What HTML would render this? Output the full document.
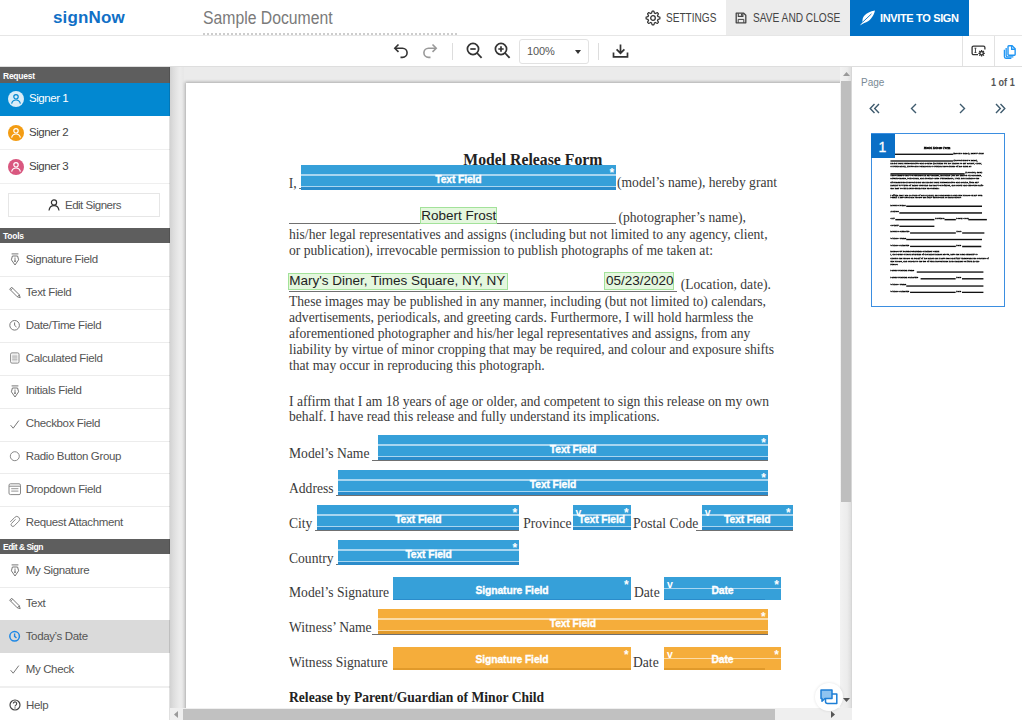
<!DOCTYPE html>
<html><head><meta charset="utf-8"><title>signNow</title>
<style>
html,body{margin:0;padding:0;}
body{width:1022px;height:720px;overflow:hidden;position:relative;background:#fff;font-family:'Liberation Sans', sans-serif;}
.t{position:absolute;white-space:pre;line-height:1;}
.r{position:absolute;}
svg.r{overflow:visible;}
</style></head><body>
<div class="r" style="left:0px;top:35px;width:1022px;height:1px;background:#e6e6e6;"></div>
<div class="t" style="left:53px;top:8.91px;font-size:17px;color:#1070c6;font-weight:bold;font-family:'Liberation Sans', sans-serif;letter-spacing:0.15px;">signNow</div>
<div class="t" style="left:203px;top:9.69px;font-size:17.5px;color:#7a7a7a;font-weight:normal;font-family:'Liberation Sans', sans-serif;letter-spacing:0px;transform:scaleX(0.9);transform-origin:0 0;">Sample Document</div>
<div class="r" style="left:203px;top:33px;width:255px;height:1.5px;background:repeating-linear-gradient(90deg,#cdcdcd 0 2px,transparent 2px 4px);"></div>
<svg class="r" style="left:645px;top:10px" width="16" height="16" viewBox="0 0 16 16"><path d="M14.90 8.00 L14.89 8.27 L14.88 8.54 L14.83 8.81 L14.38 9.01 L13.88 9.17 L13.38 9.29 L12.93 9.39 L12.85 9.58 L12.78 9.77 L12.71 9.95 L12.63 10.14 L12.54 10.32 L12.47 10.50 L12.72 10.89 L12.99 11.33 L13.23 11.80 L13.40 12.26 L13.25 12.48 L13.07 12.68 L12.88 12.88 L12.68 13.07 L12.48 13.25 L12.26 13.40 L11.80 13.23 L11.33 12.99 L10.89 12.72 L10.50 12.47 L10.32 12.54 L10.14 12.63 L9.95 12.71 L9.77 12.78 L9.58 12.85 L9.39 12.93 L9.29 13.38 L9.17 13.88 L9.01 14.38 L8.81 14.83 L8.54 14.88 L8.27 14.89 L8.00 14.90 L7.73 14.89 L7.46 14.88 L7.19 14.83 L6.99 14.38 L6.83 13.88 L6.71 13.38 L6.61 12.93 L6.42 12.85 L6.23 12.78 L6.05 12.71 L5.86 12.63 L5.68 12.54 L5.50 12.47 L5.11 12.72 L4.67 12.99 L4.20 13.23 L3.74 13.40 L3.52 13.25 L3.32 13.07 L3.12 12.88 L2.93 12.68 L2.75 12.48 L2.60 12.26 L2.77 11.80 L3.01 11.33 L3.28 10.89 L3.53 10.50 L3.46 10.32 L3.37 10.14 L3.29 9.95 L3.22 9.77 L3.15 9.58 L3.07 9.39 L2.62 9.29 L2.12 9.17 L1.62 9.01 L1.17 8.81 L1.12 8.54 L1.11 8.27 L1.10 8.00 L1.11 7.73 L1.12 7.46 L1.17 7.19 L1.62 6.99 L2.12 6.83 L2.62 6.71 L3.07 6.61 L3.15 6.42 L3.22 6.23 L3.29 6.05 L3.37 5.86 L3.46 5.68 L3.53 5.50 L3.28 5.11 L3.01 4.67 L2.77 4.20 L2.60 3.74 L2.75 3.52 L2.93 3.32 L3.12 3.12 L3.32 2.93 L3.52 2.75 L3.74 2.60 L4.20 2.77 L4.67 3.01 L5.11 3.28 L5.50 3.53 L5.68 3.46 L5.86 3.37 L6.05 3.29 L6.23 3.22 L6.42 3.15 L6.61 3.07 L6.71 2.62 L6.83 2.12 L6.99 1.62 L7.19 1.17 L7.46 1.12 L7.73 1.11 L8.00 1.10 L8.27 1.11 L8.54 1.12 L8.81 1.17 L9.01 1.62 L9.17 2.12 L9.29 2.62 L9.39 3.07 L9.58 3.15 L9.77 3.22 L9.95 3.29 L10.14 3.37 L10.32 3.46 L10.50 3.53 L10.89 3.28 L11.33 3.01 L11.80 2.77 L12.26 2.60 L12.48 2.75 L12.68 2.93 L12.88 3.12 L13.07 3.32 L13.25 3.52 L13.40 3.74 L13.23 4.20 L12.99 4.67 L12.72 5.11 L12.47 5.50 L12.54 5.68 L12.63 5.86 L12.71 6.05 L12.78 6.23 L12.85 6.42 L12.93 6.61 L13.38 6.71 L13.88 6.83 L14.38 6.99 L14.83 7.19 L14.88 7.46 L14.89 7.73Z" fill="none" stroke="#333" stroke-width="1.25" stroke-linejoin="round"/><circle cx="8" cy="8" r="2.3" fill="none" stroke="#333" stroke-width="1.3"/></svg><div class="t" style="left:665.5px;top:12.09px;font-size:12.3px;color:#444;font-weight:normal;font-family:'Liberation Sans', sans-serif;letter-spacing:0px;transform:scaleX(0.82);transform-origin:0 0;">SETTINGS</div>
<div class="r" style="left:726px;top:0px;width:124px;height:35px;background:#ececec;"></div>
<svg class="r" style="left:735px;top:12px" width="12" height="12" viewBox="0 0 12 12"><path d="M1.2 1.2h7.5l2.1 2.1v7.5H1.2z" fill="none" stroke="#444" stroke-width="1.3" stroke-linejoin="round"/><path d="M3.3 1.2v3.2h4.6V1.2" fill="none" stroke="#444" stroke-width="1.1"/><rect x="6" y="1.6" width="1.4" height="2.2" fill="#444"/><path d="M3.2 10.8V7.4h5.6v3.4" fill="none" stroke="#444" stroke-width="1"/></svg><div class="t" style="left:752.5px;top:12.09px;font-size:12.3px;color:#444;font-weight:normal;font-family:'Liberation Sans', sans-serif;letter-spacing:0px;transform:scaleX(0.826);transform-origin:0 0;">SAVE AND CLOSE</div>
<div class="r" style="left:850px;top:0px;width:119px;height:35.5px;background:#0071c6;"></div>
<svg class="r" style="left:859px;top:10px" width="17" height="16" viewBox="0 0 17 16"><path d="M0.8 15.6L3.6 12.2C2.8 7.5 6 2.5 16 0.6 14.6 6.5 11 11.5 5.2 13z" fill="#fff"/><path d="M3.6 12.2L12.5 3.8" stroke="#0071c6" stroke-width="0.9"/></svg><div class="t" style="left:880px;top:12.69px;font-size:11px;color:#fff;font-weight:bold;font-family:'Liberation Sans', sans-serif;letter-spacing:-0.35px;">INVITE TO SIGN</div>
<div class="r" style="left:0px;top:66px;width:1022px;height:1px;background:#dedede;"></div>
<svg class="r" style="left:393px;top:43px" width="17" height="16" viewBox="0 0 17 16"><path d="M5.5 1.5L1.8 5.2 5.5 8.9" fill="none" stroke="#333" stroke-width="1.6"/><path d="M2 5.2h7.5a4.6 4.6 0 010 9.2H7.5" fill="none" stroke="#333" stroke-width="1.6"/></svg><svg class="r" style="left:421px;top:43px" width="17" height="16" viewBox="0 0 17 16"><path d="M11.5 1.5l3.7 3.7-3.7 3.7" fill="none" stroke="#999" stroke-width="1.6"/><path d="M15 5.2H7.5a4.6 4.6 0 000 9.2h2" fill="none" stroke="#999" stroke-width="1.6"/></svg><div class="r" style="left:452px;top:43px;width:1px;height:17px;background:#dddddd;"></div>
<svg class="r" style="left:466px;top:42px" width="17" height="18" viewBox="0 0 17 18"><circle cx="7" cy="7" r="5.6" fill="none" stroke="#333" stroke-width="1.7"/><path d="M4.3 7h5.4" stroke="#333" stroke-width="1.7"/><path d="M11 11l4.6 4.8" stroke="#333" stroke-width="1.8"/></svg><svg class="r" style="left:494px;top:42px" width="17" height="18" viewBox="0 0 17 18"><circle cx="7" cy="7" r="5.6" fill="none" stroke="#333" stroke-width="1.7"/><path d="M4.3 7h5.4M7 4.3v5.4" stroke="#333" stroke-width="1.7"/><path d="M11 11l4.6 4.8" stroke="#333" stroke-width="1.8"/></svg><div class="r" style="left:518.5px;top:39px;width:68px;height:23px;border:1px solid #e2e2e2;border-radius:3px;background:#fff"></div>
<div class="t" style="left:527px;top:46.49px;font-size:11px;color:#555;font-weight:normal;font-family:'Liberation Sans', sans-serif;letter-spacing:-0.1px;">100%</div>
<svg class="r" style="left:575px;top:50px" width="6" height="4" viewBox="0 0 6 4"><path d="M0 0h6L3 4z" fill="#333"/></svg><div class="r" style="left:598px;top:43px;width:1px;height:17px;background:#dddddd;"></div>
<svg class="r" style="left:612px;top:44px" width="17" height="14" viewBox="0 0 17 14"><path d="M8.5 0.5v8.5M4.6 5.3l3.9 3.9 3.9-3.9" fill="none" stroke="#333" stroke-width="1.7"/><path d="M1.5 8.5v4.3h14V8.5" fill="none" stroke="#333" stroke-width="1.7"/></svg><div class="r" style="left:962px;top:36px;width:1px;height:30px;background:#e2e2e2;"></div>
<div class="r" style="left:994px;top:36px;width:1px;height:30px;background:#e2e2e2;"></div>
<svg class="r" style="left:971px;top:45px" width="16" height="13" viewBox="0 0 16 13"><path d="M7 9.7H2.6A1.5 1.5 0 011.1 8.2V2.6A1.5 1.5 0 012.6 1.1h9.8a1.5 1.5 0 011.5 1.5v1.8" fill="none" stroke="#333" stroke-width="1.3"/><path d="M3.5 3.2h1.9M4.45 3.2v4.3M3.5 7.5h1.9" stroke="#333" stroke-width="0.9"/><g transform="translate(10.6 8.3)"><path d="M0-3.2V3.2M-3.2 0H3.2M-2.3-2.3L2.3 2.3M-2.3 2.3L2.3-2.3" stroke="#333" stroke-width="1.3"/><circle r="2.3" fill="#333"/><circle r="1.05" fill="#fff"/></g></svg><svg class="r" style="left:1002.5px;top:44.5px" width="13" height="13.9" viewBox="0 0 14 15"><path d="M1.5 5.2v7.6A1.5 1.5 0 003 14.3h6" fill="none" stroke="#2196f3" stroke-width="1.4"/><path d="M3.4 3.3v8A1.5 1.5 0 004.9 12.8h6.3" fill="none" stroke="#2196f3" stroke-width="1.4"/><path d="M5.4 1.6a.8.8 0 01.8-.8h3.6l3.3 3.3v6.2a.8.8 0 01-.8.8H6.2a.8.8 0 01-.8-.8z" fill="#fff" stroke="#2196f3" stroke-width="1.5"/><path d="M9.3 0.8v3.8h3.8" fill="none" stroke="#2196f3" stroke-width="1.4"/></svg><div class="r" style="left:0px;top:67px;width:170px;height:653px;background:#fff;"></div>
<div class="r" style="left:0px;top:67px;width:170px;height:15.5px;background:#5e5e5e;"></div>
<div class="t" style="left:3px;top:71.60px;font-size:8.5px;color:#fff;font-weight:bold;font-family:'Liberation Sans', sans-serif;letter-spacing:-0.25px;">Request</div>
<div class="r" style="left:0px;top:82.5px;width:170px;height:33px;background:#0288d1;"></div>
<svg class="r" style="left:8px;top:91px" width="16" height="16" viewBox="0 0 16 16"><circle cx="8" cy="8" r="8" fill="#d9ecf8"/><circle cx="8" cy="5.8" r="2.2" fill="none" stroke="#0288d1" stroke-width="1.2"/><path d="M3.6 12.6c.6-2.2 2.3-3.6 4.4-3.6s3.8 1.4 4.4 3.6" fill="none" stroke="#0288d1" stroke-width="1.2"/></svg>
<div class="t" style="left:29px;top:93.27px;font-size:11.5px;color:#fff;font-weight:normal;font-family:'Liberation Sans', sans-serif;letter-spacing:-0.45px;">Signer 1</div>
<svg class="r" style="left:8px;top:125px" width="16" height="16" viewBox="0 0 16 16"><circle cx="8" cy="8" r="8" fill="#f39c12"/><circle cx="8" cy="5.8" r="2.2" fill="none" stroke="#fff" stroke-width="1.2"/><path d="M3.6 12.6c.6-2.2 2.3-3.6 4.4-3.6s3.8 1.4 4.4 3.6" fill="none" stroke="#fff" stroke-width="1.2"/></svg>
<div class="t" style="left:29px;top:127.27px;font-size:11.5px;color:#444;font-weight:normal;font-family:'Liberation Sans', sans-serif;letter-spacing:-0.45px;">Signer 2</div>
<div class="r" style="left:0px;top:149px;width:170px;height:1px;background:#efefef;"></div>
<svg class="r" style="left:8px;top:159px" width="16" height="16" viewBox="0 0 16 16"><circle cx="8" cy="8" r="8" fill="#d9577f"/><circle cx="8" cy="5.8" r="2.2" fill="none" stroke="#fff" stroke-width="1.2"/><path d="M3.6 12.6c.6-2.2 2.3-3.6 4.4-3.6s3.8 1.4 4.4 3.6" fill="none" stroke="#fff" stroke-width="1.2"/></svg>
<div class="t" style="left:29px;top:161.27px;font-size:11.5px;color:#444;font-weight:normal;font-family:'Liberation Sans', sans-serif;letter-spacing:-0.45px;">Signer 3</div>
<div class="r" style="left:0px;top:183px;width:170px;height:1px;background:#efefef;"></div>
<div class="r" style="left:8px;top:193px;width:150px;height:22px;border:1px solid #e6e6e6;background:#fff"></div>
<svg class="r" style="left:48px;top:199px" width="12" height="12" viewBox="0 0 12 12"><circle cx="6" cy="3.5" r="2.6" fill="none" stroke="#333" stroke-width="1.2"/><path d="M1 11.5c.4-3 2.4-4.8 5-4.8s4.6 1.8 5 4.8" fill="none" stroke="#333" stroke-width="1.2"/></svg><div class="t" style="left:65px;top:199.77px;font-size:11.5px;color:#555;font-weight:normal;font-family:'Liberation Sans', sans-serif;letter-spacing:-0.5px;">Edit Signers</div>
<div class="r" style="left:0px;top:228px;width:170px;height:15px;background:#5e5e5e;"></div>
<div class="t" style="left:3px;top:231.80px;font-size:8.5px;color:#fff;font-weight:bold;font-family:'Liberation Sans', sans-serif;letter-spacing:-0.25px;">Tools</div>
<svg class="r" style="left:9px;top:253.0px" width="12" height="13" viewBox="0 0 12 13"><path d="M2.6 0.9h6.8" stroke="#777" stroke-width="1"/><path d="M3.4 3h5.2l1 3.8L6 12 2.4 6.8z" fill="none" stroke="#777" stroke-width="1" stroke-linejoin="round"/><path d="M6 4.5v3.3" stroke="#777" stroke-width="0.9"/><circle cx="6" cy="8.2" r=".9" fill="#777"/></svg>
<div class="t" style="left:25.7px;top:253.87px;font-size:11.5px;color:#555;font-weight:normal;font-family:'Liberation Sans', sans-serif;letter-spacing:-0.35px;">Signature Field</div>
<div class="r" style="left:0px;top:276.0px;width:170px;height:1px;background:#ececec;"></div>
<svg class="r" style="left:9px;top:285.9px" width="12" height="13" viewBox="0 0 12 13"><path d="M0.7 3.2L2.7 1.2 10.3 8.8 11.2 11.6 8.3 10.8z" fill="none" stroke="#777" stroke-width="1" stroke-linejoin="round"/><path d="M1.7 4.2L3.7 2.2M8.3 10.8L10.3 8.8" stroke="#777" stroke-width="0.9"/></svg>
<div class="t" style="left:25.7px;top:286.77px;font-size:11.5px;color:#555;font-weight:normal;font-family:'Liberation Sans', sans-serif;letter-spacing:-0.35px;">Text Field</div>
<div class="r" style="left:0px;top:308.9px;width:170px;height:1px;background:#ececec;"></div>
<svg class="r" style="left:9px;top:318.8px" width="12" height="13" viewBox="0 0 12 13"><circle cx="5.6" cy="6.3" r="4.8" fill="none" stroke="#777" stroke-width="1"/><path d="M5.6 3.4v3l1.9 1.6" fill="none" stroke="#777" stroke-width="1"/></svg>
<div class="t" style="left:25.7px;top:319.67px;font-size:11.5px;color:#555;font-weight:normal;font-family:'Liberation Sans', sans-serif;letter-spacing:-0.35px;">Date/Time Field</div>
<div class="r" style="left:0px;top:341.8px;width:170px;height:1px;background:#ececec;"></div>
<svg class="r" style="left:9px;top:351.7px" width="12" height="13" viewBox="0 0 12 13"><rect x="1.6" y="0.9" width="8.4" height="10.2" rx="1.3" fill="none" stroke="#888" stroke-width="1"/><rect x="3.2" y="2.5" width="5.2" height="7" fill="#ddd"/><path d="M3.2 4.2h5.2M3.2 5.9h5.2M3.2 7.6h5.2" stroke="#aaa" stroke-width=".6"/></svg>
<div class="t" style="left:25.7px;top:352.57px;font-size:11.5px;color:#555;font-weight:normal;font-family:'Liberation Sans', sans-serif;letter-spacing:-0.35px;">Calculated Field</div>
<div class="r" style="left:0px;top:374.7px;width:170px;height:1px;background:#ececec;"></div>
<svg class="r" style="left:9px;top:384.6px" width="12" height="13" viewBox="0 0 12 13"><path d="M2.6 0.9h6.8" stroke="#777" stroke-width="1"/><path d="M3.4 3h5.2l1 3.8L6 12 2.4 6.8z" fill="none" stroke="#777" stroke-width="1" stroke-linejoin="round"/><path d="M6 4.5v3.3" stroke="#777" stroke-width="0.9"/><circle cx="6" cy="8.2" r=".9" fill="#777"/></svg>
<div class="t" style="left:25.7px;top:385.47px;font-size:11.5px;color:#555;font-weight:normal;font-family:'Liberation Sans', sans-serif;letter-spacing:-0.35px;">Initials Field</div>
<div class="r" style="left:0px;top:407.6px;width:170px;height:1px;background:#ececec;"></div>
<svg class="r" style="left:9px;top:417.5px" width="12" height="13" viewBox="0 0 12 13"><path d="M1.6 7.2l2.6 3L9.8 2.6" fill="none" stroke="#777" stroke-width="1"/></svg>
<div class="t" style="left:25.7px;top:418.37px;font-size:11.5px;color:#555;font-weight:normal;font-family:'Liberation Sans', sans-serif;letter-spacing:-0.35px;">Checkbox Field</div>
<div class="r" style="left:0px;top:440.5px;width:170px;height:1px;background:#ececec;"></div>
<svg class="r" style="left:9px;top:450.4px" width="12" height="13" viewBox="0 0 12 13"><circle cx="5.8" cy="6.2" r="4.5" fill="none" stroke="#888" stroke-width="1"/></svg>
<div class="t" style="left:25.7px;top:451.27px;font-size:11.5px;color:#555;font-weight:normal;font-family:'Liberation Sans', sans-serif;letter-spacing:-0.35px;">Radio Button Group</div>
<div class="r" style="left:0px;top:473.4px;width:170px;height:1px;background:#ececec;"></div>
<svg class="r" style="left:9px;top:483.29999999999995px" width="12" height="13" viewBox="0 0 12 13"><rect x="0" y="0.8" width="11.5" height="10.8" rx="1.5" fill="none" stroke="#888" stroke-width="1"/><path d="M0 3.2h11.5" stroke="#888" stroke-width="1"/><path d="M2.2 5.6h7.2M2.2 8.2h7.2" stroke="#aaa" stroke-width="1.2"/></svg>
<div class="t" style="left:25.7px;top:484.17px;font-size:11.5px;color:#555;font-weight:normal;font-family:'Liberation Sans', sans-serif;letter-spacing:-0.35px;">Dropdown Field</div>
<div class="r" style="left:0px;top:506.29999999999995px;width:170px;height:1px;background:#ececec;"></div>
<svg class="r" style="left:9px;top:516.2px" width="12" height="13" viewBox="0 0 12 13"><path d="M6.5 3.3L2.6 7.4a1.8 1.8 0 002.6 2.5L9.8 5.3a2.8 2.8 0 00-4-4L1.3 5.9" fill="none" stroke="#888" stroke-width="1"/></svg>
<div class="t" style="left:25.7px;top:517.07px;font-size:11.5px;color:#555;font-weight:normal;font-family:'Liberation Sans', sans-serif;letter-spacing:-0.35px;">Request Attachment</div>
<div class="r" style="left:0px;top:539px;width:170px;height:15px;background:#5e5e5e;"></div>
<div class="t" style="left:3px;top:543.10px;font-size:8.5px;color:#fff;font-weight:bold;font-family:'Liberation Sans', sans-serif;letter-spacing:-0.5px;">Edit &amp; Sign</div>
<svg class="r" style="left:9px;top:564px" width="12" height="13" viewBox="0 0 12 13"><path d="M2.6 0.9h6.8" stroke="#777" stroke-width="1"/><path d="M3.4 3h5.2l1 3.8L6 12 2.4 6.8z" fill="none" stroke="#777" stroke-width="1" stroke-linejoin="round"/><path d="M6 4.5v3.3" stroke="#777" stroke-width="0.9"/><circle cx="6" cy="8.2" r=".9" fill="#777"/></svg>
<div class="t" style="left:25.7px;top:564.87px;font-size:11.5px;color:#555;font-weight:normal;font-family:'Liberation Sans', sans-serif;letter-spacing:-0.35px;">My Signature</div>
<div class="r" style="left:0px;top:587px;width:170px;height:1px;background:#ececec;"></div>
<svg class="r" style="left:9px;top:597px" width="12" height="13" viewBox="0 0 12 13"><path d="M0.7 3.2L2.7 1.2 10.3 8.8 11.2 11.6 8.3 10.8z" fill="none" stroke="#777" stroke-width="1" stroke-linejoin="round"/><path d="M1.7 4.2L3.7 2.2M8.3 10.8L10.3 8.8" stroke="#777" stroke-width="0.9"/></svg>
<div class="t" style="left:25.7px;top:597.87px;font-size:11.5px;color:#555;font-weight:normal;font-family:'Liberation Sans', sans-serif;letter-spacing:-0.35px;">Text</div>
<div class="r" style="left:0px;top:620px;width:170px;height:1px;background:#ececec;"></div>
<div class="r" style="left:0px;top:620px;width:170px;height:33px;background:#dadada;"></div>
<svg class="r" style="left:9px;top:630px" width="12" height="13" viewBox="0 0 12 13"><circle cx="5.6" cy="6.3" r="4.8" fill="none" stroke="#1e88e5" stroke-width="1.5"/><path d="M5.6 3.4v3l1.9 1.6" fill="none" stroke="#1e88e5" stroke-width="1.4"/></svg>
<div class="t" style="left:25.7px;top:630.87px;font-size:11.5px;color:#555;font-weight:normal;font-family:'Liberation Sans', sans-serif;letter-spacing:-0.35px;">Today’s Date</div>
<svg class="r" style="left:9px;top:663px" width="12" height="13" viewBox="0 0 12 13"><path d="M1.6 7.2l2.6 3L9.8 2.6" fill="none" stroke="#777" stroke-width="1"/></svg>
<div class="t" style="left:25.7px;top:663.87px;font-size:11.5px;color:#555;font-weight:normal;font-family:'Liberation Sans', sans-serif;letter-spacing:-0.35px;">My Check</div>
<div class="r" style="left:0px;top:685.5px;width:170px;height:2.5px;background:#efefef;"></div>
<svg class="r" style="left:9px;top:699px" width="12" height="12" viewBox="0 0 12 12"><circle cx="6" cy="6" r="5" fill="none" stroke="#444" stroke-width="1.2"/><path d="M4.3 4.6a1.7 1.7 0 113 1.1c-.8.6-1.3.9-1.3 1.7" fill="none" stroke="#444" stroke-width="1.1"/><circle cx="6" cy="8.9" r=".7" fill="#444"/></svg>
<div class="t" style="left:26px;top:699.77px;font-size:11.5px;color:#555;font-weight:normal;font-family:'Liberation Sans', sans-serif;letter-spacing:-0.35px;">Help</div>
<div class="r" style="left:169px;top:67px;width:1px;height:653px;background:rgba(0,0,0,0.12);"></div>
<div class="r" style="left:170px;top:67px;width:682px;height:653px;background:#ebebeb;"></div>
<div class="r" style="left:170px;top:67px;width:14px;height:641px;background:linear-gradient(90deg,#d2d2d2 0,#dcdcdc 3px,#e6e6e6 7px,#ececec 10px,#e8e8e8 13px);"></div>
<div class="r" style="left:185.5px;top:82.5px;width:660px;height:640px;background:#fff;box-shadow:0 0 3px 1px rgba(0,0,0,0.28)"></div>
<div class="r" style="left:839.5px;top:67px;width:12.5px;height:641px;background:linear-gradient(90deg,#f2f2f2 0,#ececec 60%,#dedede 92%,#cfcfcf 100%);"></div>
<div class="r" style="left:841px;top:80.5px;width:10px;height:421.5px;background:#bebebe;"></div>
<svg class="r" style="left:843px;top:72px" width="7" height="4" viewBox="0 0 7 4"><path d="M0 4h7L3.5 0z" fill="#9a9a9a"/></svg><svg class="r" style="left:843px;top:698px" width="7" height="4" viewBox="0 0 7 4"><path d="M0 0h7L3.5 4z" fill="#555"/></svg><div class="r" style="left:170px;top:708px;width:682px;height:12px;background:#efefef;"></div>
<div class="r" style="left:183px;top:709px;width:592px;height:11px;background:#c1c1c1;"></div>
<svg class="r" style="left:174px;top:711px" width="4" height="7" viewBox="0 0 4 7"><path d="M4 0v7L0 3.5z" fill="#9a9a9a"/></svg><svg class="r" style="left:831px;top:711px" width="4" height="7" viewBox="0 0 4 7"><path d="M0 0v7l4-3.5z" fill="#555"/></svg><div class="t" style="left:463.3px;top:151.51px;font-size:15.75px;color:#222;font-weight:bold;font-family:'Liberation Serif', serif;letter-spacing:0px;">Model Release Form</div>
<div class="t" style="left:288.8px;top:176.81px;font-size:13.6px;color:#3a3a3a;font-weight:normal;font-family:'Liberation Serif', serif;letter-spacing:0px;">I,</div>
<div class="r" style="left:299px;top:188px;width:317px;height:1px;background:#707070;"></div>
<div class="t" style="left:617px;top:176.31px;font-size:13.6px;color:#3a3a3a;font-weight:normal;font-family:'Liberation Serif', serif;letter-spacing:0px;">(model’s name), hereby grant</div>
<div class="r" style="left:288.8px;top:223px;width:327.2px;height:1px;background:#707070;"></div>
<div class="t" style="left:618.5px;top:211.31px;font-size:13.6px;color:#3a3a3a;font-weight:normal;font-family:'Liberation Serif', serif;letter-spacing:0px;">(photographer’s name),</div>
<div class="t" style="left:289px;top:228.11px;font-size:13.6px;color:#3a3a3a;font-weight:normal;font-family:'Liberation Serif', serif;letter-spacing:0px;">his/her legal representatives and assigns (including but not limited to any agency, client,</div>
<div class="t" style="left:289px;top:244.01px;font-size:13.6px;color:#3a3a3a;font-weight:normal;font-family:'Liberation Serif', serif;letter-spacing:0px;">or publication), irrevocable permission to publish photographs of me taken at:</div>
<div class="r" style="left:288.8px;top:290.5px;width:387.8px;height:1px;background:#707070;"></div>
<div class="t" style="left:680.7px;top:278.31px;font-size:13.6px;color:#3a3a3a;font-weight:normal;font-family:'Liberation Serif', serif;letter-spacing:0px;">(Location, date).</div>
<div class="t" style="left:289px;top:294.81px;font-size:13.6px;color:#3a3a3a;font-weight:normal;font-family:'Liberation Serif', serif;letter-spacing:0px;">These images may be published in any manner, including (but not limited to) calendars,</div>
<div class="t" style="left:289px;top:310.96px;font-size:13.6px;color:#3a3a3a;font-weight:normal;font-family:'Liberation Serif', serif;letter-spacing:0px;">advertisements, periodicals, and greeting cards. Furthermore, I will hold harmless the</div>
<div class="t" style="left:289px;top:327.11px;font-size:13.6px;color:#3a3a3a;font-weight:normal;font-family:'Liberation Serif', serif;letter-spacing:0px;">aforementioned photographer and his/her legal representatives and assigns, from any</div>
<div class="t" style="left:289px;top:343.26px;font-size:13.6px;color:#3a3a3a;font-weight:normal;font-family:'Liberation Serif', serif;letter-spacing:0px;">liability by virtue of minor cropping that may be required, and colour and exposure shifts</div>
<div class="t" style="left:289px;top:359.41px;font-size:13.6px;color:#3a3a3a;font-weight:normal;font-family:'Liberation Serif', serif;letter-spacing:0px;">that may occur in reproducing this photograph.</div>
<div class="t" style="left:289px;top:394.71px;font-size:13.6px;color:#3a3a3a;font-weight:normal;font-family:'Liberation Serif', serif;letter-spacing:0px;">I affirm that I am 18 years of age or older, and competent to sign this release on my own</div>
<div class="t" style="left:289px;top:409.91px;font-size:13.6px;color:#3a3a3a;font-weight:normal;font-family:'Liberation Serif', serif;letter-spacing:0px;">behalf. I have read this release and fully understand its implications.</div>
<div class="t" style="left:289px;top:446.81px;font-size:13.6px;color:#3a3a3a;font-weight:normal;font-family:'Liberation Serif', serif;letter-spacing:0px;">Model’s Name</div>
<div class="r" style="left:372px;top:459.5px;width:396px;height:1px;background:#707070;"></div>
<div class="t" style="left:289px;top:481.81px;font-size:13.6px;color:#3a3a3a;font-weight:normal;font-family:'Liberation Serif', serif;letter-spacing:0px;">Address</div>
<div class="r" style="left:336px;top:494.5px;width:432px;height:1px;background:#707070;"></div>
<div class="t" style="left:289px;top:517.31px;font-size:13.6px;color:#3a3a3a;font-weight:normal;font-family:'Liberation Serif', serif;letter-spacing:0px;">City</div>
<div class="r" style="left:315px;top:529.5px;width:204px;height:1px;background:#707070;"></div>
<div class="t" style="left:523.2px;top:517.31px;font-size:13.6px;color:#3a3a3a;font-weight:normal;font-family:'Liberation Serif', serif;letter-spacing:0px;">Province</div>
<div class="t" style="left:632.9px;top:517.31px;font-size:13.6px;color:#3a3a3a;font-weight:normal;font-family:'Liberation Serif', serif;letter-spacing:0px;">Postal Code</div>
<div class="r" style="left:696px;top:529.5px;width:97px;height:1px;background:#707070;"></div>
<div class="t" style="left:289px;top:551.71px;font-size:13.6px;color:#3a3a3a;font-weight:normal;font-family:'Liberation Serif', serif;letter-spacing:0px;">Country</div>
<div class="r" style="left:336px;top:564px;width:183px;height:1px;background:#707070;"></div>
<div class="t" style="left:289px;top:586.01px;font-size:13.6px;color:#3a3a3a;font-weight:normal;font-family:'Liberation Serif', serif;letter-spacing:0px;">Model’s Signature</div>
<div class="t" style="left:634px;top:586.31px;font-size:13.6px;color:#3a3a3a;font-weight:normal;font-family:'Liberation Serif', serif;letter-spacing:0px;">Date</div>
<div class="t" style="left:289px;top:621.11px;font-size:13.6px;color:#3a3a3a;font-weight:normal;font-family:'Liberation Serif', serif;letter-spacing:0px;">Witness’ Name</div>
<div class="r" style="left:372px;top:633.5px;width:396px;height:1px;background:#707070;"></div>
<div class="t" style="left:289px;top:656.01px;font-size:13.6px;color:#3a3a3a;font-weight:normal;font-family:'Liberation Serif', serif;letter-spacing:0px;">Witness Signature</div>
<div class="t" style="left:633px;top:656.31px;font-size:13.6px;color:#3a3a3a;font-weight:normal;font-family:'Liberation Serif', serif;letter-spacing:0px;">Date</div>
<div class="t" style="left:289px;top:691.11px;font-size:13.6px;color:#222;font-weight:bold;font-family:'Liberation Serif', serif;letter-spacing:0px;">Release by Parent/Guardian of Minor Child</div>
<div class="r" style="left:419.7px;top:207.3px;width:77.6px;height:17px;background:#e4f7de;border:1px solid #a3e29a;box-sizing:border-box"></div>
<div class="t" style="left:421.2px;top:208.77px;font-size:13.5px;color:#222;font-weight:normal;font-family:'Liberation Sans', sans-serif;letter-spacing:0px;">Robert Frost</div>
<div class="r" style="left:287.7px;top:272.7px;width:220.3px;height:17.5px;background:#e4f7de;border:1px solid #a3e29a;box-sizing:border-box"></div>
<div class="t" style="left:289.2px;top:274.07px;font-size:13.5px;color:#222;font-weight:normal;font-family:'Liberation Sans', sans-serif;letter-spacing:0px;">Mary's Diner, Times Square, NY, NY</div>
<div class="r" style="left:604.4px;top:272px;width:69.6px;height:18px;background:#e4f7de;border:1px solid #a3e29a;box-sizing:border-box"></div>
<div class="t" style="left:605.9px;top:274.07px;font-size:13.5px;color:#222;font-weight:normal;font-family:'Liberation Sans', sans-serif;letter-spacing:0px;">05/23/2020</div>
<div class="r" style="left:300.5px;top:165px;width:315.79999999999995px;height:25px;background:#36a0d9"><div class="r" style="left:0;top:9px;width:100%;height:2px;background:#a9d6f0"></div><div class="r" style="left:0;top:20.8px;width:100%;height:1.5px;background:#a9d6f0"></div><div class="r" style="left:0;top:22.3px;width:100%;height:2.7px;background:#2b8ccb"></div></div>
<div class="t" style="left:300.5px;width:315.79999999999995px;text-align:center;top:172.6px;font-size:10.3px;line-height:13px;color:#fff;font-weight:bold;font-family:'Liberation Sans', sans-serif;letter-spacing:-0.1px;-webkit-text-stroke:0.35px #fff">Text Field</div>
<div class="t" style="left:609.5px;top:167px;font-size:12px;line-height:12px;color:#fff;font-family:'Liberation Sans', sans-serif;font-weight:bold">*</div>
<div class="r" style="left:378px;top:435px;width:390px;height:25px;background:#36a0d9"><div class="r" style="left:0;top:9px;width:100%;height:2px;background:#a9d6f0"></div><div class="r" style="left:0;top:20.8px;width:100%;height:1.5px;background:#a9d6f0"></div><div class="r" style="left:0;top:22.3px;width:100%;height:2.7px;background:#2b8ccb"></div></div>
<div class="t" style="left:378px;width:390px;text-align:center;top:442.6px;font-size:10.3px;line-height:13px;color:#fff;font-weight:bold;font-family:'Liberation Sans', sans-serif;letter-spacing:-0.1px;-webkit-text-stroke:0.35px #fff">Text Field</div>
<div class="t" style="left:761.2px;top:437px;font-size:12px;line-height:12px;color:#fff;font-family:'Liberation Sans', sans-serif;font-weight:bold">*</div>
<div class="r" style="left:338px;top:470px;width:430px;height:25px;background:#36a0d9"><div class="r" style="left:0;top:9px;width:100%;height:2px;background:#a9d6f0"></div><div class="r" style="left:0;top:20.8px;width:100%;height:1.5px;background:#a9d6f0"></div><div class="r" style="left:0;top:22.3px;width:100%;height:2.7px;background:#2b8ccb"></div></div>
<div class="t" style="left:338px;width:430px;text-align:center;top:477.6px;font-size:10.3px;line-height:13px;color:#fff;font-weight:bold;font-family:'Liberation Sans', sans-serif;letter-spacing:-0.1px;-webkit-text-stroke:0.35px #fff">Text Field</div>
<div class="t" style="left:761.2px;top:472px;font-size:12px;line-height:12px;color:#fff;font-family:'Liberation Sans', sans-serif;font-weight:bold">*</div>
<div class="r" style="left:317.4px;top:505px;width:201.80000000000007px;height:25px;background:#36a0d9"><div class="r" style="left:0;top:9px;width:100%;height:2px;background:#a9d6f0"></div><div class="r" style="left:0;top:20.8px;width:100%;height:1.5px;background:#a9d6f0"></div><div class="r" style="left:0;top:22.3px;width:100%;height:2.7px;background:#2b8ccb"></div></div>
<div class="t" style="left:317.4px;width:201.80000000000007px;text-align:center;top:512.6px;font-size:10.3px;line-height:13px;color:#fff;font-weight:bold;font-family:'Liberation Sans', sans-serif;letter-spacing:-0.1px;-webkit-text-stroke:0.35px #fff">Text Field</div>
<div class="t" style="left:512.4000000000001px;top:507px;font-size:12px;line-height:12px;color:#fff;font-family:'Liberation Sans', sans-serif;font-weight:bold">*</div>
<div class="r" style="left:572.6px;top:505px;width:58.19999999999993px;height:25px;background:#36a0d9"><div class="r" style="left:0;top:9px;width:100%;height:2px;background:#a9d6f0"></div><div class="r" style="left:0;top:20.8px;width:100%;height:1.5px;background:#a9d6f0"></div><div class="r" style="left:0;top:22.3px;width:100%;height:2.7px;background:#2b8ccb"></div></div>
<div class="t" style="left:572.6px;width:58.19999999999993px;text-align:center;top:512.6px;font-size:10.3px;line-height:13px;color:#fff;font-weight:bold;font-family:'Liberation Sans', sans-serif;letter-spacing:-0.1px;-webkit-text-stroke:0.35px #fff">Text Field</div>
<div class="t" style="left:624.0px;top:507px;font-size:12px;line-height:12px;color:#fff;font-family:'Liberation Sans', sans-serif;font-weight:bold">*</div>
<div class="t" style="left:575.6px;top:506.5px;font-size:10.5px;line-height:10px;color:#fff;font-family:'Liberation Sans', sans-serif;font-weight:bold">v</div>
<div class="r" style="left:701.8px;top:505px;width:90.90000000000009px;height:25px;background:#36a0d9"><div class="r" style="left:0;top:9px;width:100%;height:2px;background:#a9d6f0"></div><div class="r" style="left:0;top:20.8px;width:100%;height:1.5px;background:#a9d6f0"></div><div class="r" style="left:0;top:22.3px;width:100%;height:2.7px;background:#2b8ccb"></div></div>
<div class="t" style="left:701.8px;width:90.90000000000009px;text-align:center;top:512.6px;font-size:10.3px;line-height:13px;color:#fff;font-weight:bold;font-family:'Liberation Sans', sans-serif;letter-spacing:-0.1px;-webkit-text-stroke:0.35px #fff">Text Field</div>
<div class="t" style="left:785.9000000000001px;top:507px;font-size:12px;line-height:12px;color:#fff;font-family:'Liberation Sans', sans-serif;font-weight:bold">*</div>
<div class="t" style="left:704.8px;top:506.5px;font-size:10.5px;line-height:10px;color:#fff;font-family:'Liberation Sans', sans-serif;font-weight:bold">v</div>
<div class="r" style="left:338px;top:540px;width:181.20000000000005px;height:25px;background:#36a0d9"><div class="r" style="left:0;top:9px;width:100%;height:2px;background:#a9d6f0"></div><div class="r" style="left:0;top:20.8px;width:100%;height:1.5px;background:#a9d6f0"></div><div class="r" style="left:0;top:22.3px;width:100%;height:2.7px;background:#2b8ccb"></div></div>
<div class="t" style="left:338px;width:181.20000000000005px;text-align:center;top:547.6px;font-size:10.3px;line-height:13px;color:#fff;font-weight:bold;font-family:'Liberation Sans', sans-serif;letter-spacing:-0.1px;-webkit-text-stroke:0.35px #fff">Text Field</div>
<div class="t" style="left:512.4000000000001px;top:542px;font-size:12px;line-height:12px;color:#fff;font-family:'Liberation Sans', sans-serif;font-weight:bold">*</div>
<div class="r" style="left:393.2px;top:577px;width:237.7px;height:23px;background:#36a0d9"><div class="r" style="left:0;bottom:0;width:100%;height:1.2px;background:#2b8ccb"></div></div>
<div class="t" style="left:393.2px;width:237.7px;text-align:center;top:583.6px;font-size:10.3px;line-height:13px;color:#fff;font-weight:bold;font-family:'Liberation Sans', sans-serif;letter-spacing:-0.1px;-webkit-text-stroke:0.35px #fff">Signature Field</div>
<div class="t" style="left:624.1px;top:579px;font-size:12px;line-height:12px;color:#fff;font-family:'Liberation Sans', sans-serif;font-weight:bold">*</div>
<div class="r" style="left:664px;top:577px;width:117px;height:23px;background:#36a0d9"><div class="r" style="left:0;top:10.5px;width:100%;height:1.5px;background:#a9d6f0"></div><div class="r" style="left:0;bottom:0;width:86%;height:1.2px;background:#2b8ccb"></div></div>
<div class="t" style="left:664px;width:117px;text-align:center;top:583.6px;font-size:10.3px;line-height:13px;color:#fff;font-weight:bold;font-family:'Liberation Sans', sans-serif;letter-spacing:-0.1px;-webkit-text-stroke:0.35px #fff">Date</div>
<div class="t" style="left:774.2px;top:579px;font-size:12px;line-height:12px;color:#fff;font-family:'Liberation Sans', sans-serif;font-weight:bold">*</div>
<div class="t" style="left:667px;top:578.5px;font-size:10.5px;line-height:10px;color:#fff;font-family:'Liberation Sans', sans-serif;font-weight:bold">v</div>
<div class="r" style="left:378px;top:609px;width:389.79999999999995px;height:25px;background:#f5ad3b"><div class="r" style="left:0;top:9px;width:100%;height:2px;background:#fbdca8"></div><div class="r" style="left:0;top:20.8px;width:100%;height:1.5px;background:#fbdca8"></div><div class="r" style="left:0;top:22.3px;width:100%;height:2.7px;background:#e19a2b"></div></div>
<div class="t" style="left:378px;width:389.79999999999995px;text-align:center;top:616.6px;font-size:10.3px;line-height:13px;color:#fff;font-weight:bold;font-family:'Liberation Sans', sans-serif;letter-spacing:-0.1px;-webkit-text-stroke:0.35px #fff">Text Field</div>
<div class="t" style="left:761.0px;top:611px;font-size:12px;line-height:12px;color:#fff;font-family:'Liberation Sans', sans-serif;font-weight:bold">*</div>
<div class="r" style="left:393.2px;top:647px;width:237.7px;height:22.5px;background:#f5ad3b"><div class="r" style="left:0;bottom:0;width:100%;height:1.2px;background:#e19a2b"></div></div>
<div class="t" style="left:393.2px;width:237.7px;text-align:center;top:653.4px;font-size:10.3px;line-height:13px;color:#fff;font-weight:bold;font-family:'Liberation Sans', sans-serif;letter-spacing:-0.1px;-webkit-text-stroke:0.35px #fff">Signature Field</div>
<div class="t" style="left:624.1px;top:649px;font-size:12px;line-height:12px;color:#fff;font-family:'Liberation Sans', sans-serif;font-weight:bold">*</div>
<div class="r" style="left:664px;top:647px;width:117px;height:22.5px;background:#f5ad3b"><div class="r" style="left:0;top:10.5px;width:100%;height:1.5px;background:#fbdca8"></div><div class="r" style="left:0;bottom:0;width:86%;height:1.2px;background:#e19a2b"></div></div>
<div class="t" style="left:664px;width:117px;text-align:center;top:653.4px;font-size:10.3px;line-height:13px;color:#fff;font-weight:bold;font-family:'Liberation Sans', sans-serif;letter-spacing:-0.1px;-webkit-text-stroke:0.35px #fff">Date</div>
<div class="t" style="left:774.2px;top:649px;font-size:12px;line-height:12px;color:#fff;font-family:'Liberation Sans', sans-serif;font-weight:bold">*</div>
<div class="t" style="left:667px;top:648.5px;font-size:10.5px;line-height:10px;color:#fff;font-family:'Liberation Sans', sans-serif;font-weight:bold">v</div>
<div class="r" style="left:815px;top:683px;width:28px;height:28px;border-radius:50%;background:#fff;box-shadow:0 0 3px rgba(0,0,0,0.12)"></div>
<svg class="r" style="left:820px;top:689px" width="18" height="17" viewBox="0 0 18 17"><path d="M1 1h11v8.5H5L2 12.2V9.5H1z" fill="#8ec3f0" stroke="#1e7fd6" stroke-width="1.5" stroke-linejoin="round"/><path d="M12 5h4.8v9.5H7.5A2 2 0 015.5 12.5V9.5" fill="none" stroke="#1e7fd6" stroke-width="1.5" stroke-linejoin="round"/></svg><div class="r" style="left:852px;top:67px;width:170px;height:653px;background:#fff;"></div>
<div class="t" style="left:861px;top:77.94px;font-size:10px;color:#7a8a95;font-weight:normal;font-family:'Liberation Sans', sans-serif;letter-spacing:0px;">Page</div>
<div class="t" style="left:991px;top:77.58px;font-size:10.3px;color:#555;font-weight:bold;font-family:'Liberation Sans', sans-serif;letter-spacing:0px;transform:scaleX(0.88);transform-origin:0 0;">1 of 1</div>
<svg class="r" style="left:869px;top:103px" width="11" height="11" viewBox="0 0 11 11"><path d="M5.5 1L1.2 5.5 5.5 10M10 1L5.7 5.5 10 10" fill="none" stroke="#3f5b6e" stroke-width="1.4"/></svg><svg class="r" style="left:910px;top:103px" width="7" height="11" viewBox="0 0 7 11"><path d="M6 1L1.5 5.5 6 10" fill="none" stroke="#3f5b6e" stroke-width="1.4"/></svg><svg class="r" style="left:959px;top:103px" width="7" height="11" viewBox="0 0 7 11"><path d="M1 1l4.5 4.5L1 10" fill="none" stroke="#3f5b6e" stroke-width="1.4"/></svg><svg class="r" style="left:995px;top:103px" width="11" height="11" viewBox="0 0 11 11"><path d="M1 1l4.3 4.5L1 10M5.5 1l4.3 4.5L5.5 10" fill="none" stroke="#3f5b6e" stroke-width="1.4"/></svg><div class="r" style="left:870.5px;top:133px;width:134px;height:173.5px;border:1.5px solid #3b8ee0;box-sizing:border-box;background:#fff"></div>
<div class="r" style="left:835.26px;top:117.99px;width:1px;height:1px;transform:scale(0.1915);transform-origin:0 0"><div class="t" style="left:463.3px;top:150.81px;font-size:15.75px;color:#000;font-weight:bold;font-family:'Liberation Serif', serif;letter-spacing:0px;-webkit-text-stroke:1.6px #000;">Model Release Form</div>
<div class="t" style="left:288.8px;top:176.11px;font-size:13.6px;color:#000;font-weight:normal;font-family:'Liberation Serif', serif;letter-spacing:0px;-webkit-text-stroke:1.6px #000;">I,</div>
<div class="r" style="left:299px;top:185.5px;width:317px;height:7.5px;background:#111;"></div>
<div class="t" style="left:617px;top:175.61px;font-size:13.6px;color:#000;font-weight:normal;font-family:'Liberation Serif', serif;letter-spacing:0px;-webkit-text-stroke:1.6px #000;">(model’s name), hereby grant</div>
<div class="r" style="left:288.8px;top:220.5px;width:327.2px;height:7.5px;background:#111;"></div>
<div class="t" style="left:618.5px;top:210.61px;font-size:13.6px;color:#000;font-weight:normal;font-family:'Liberation Serif', serif;letter-spacing:0px;-webkit-text-stroke:1.6px #000;">(photographer’s name),</div>
<div class="t" style="left:289px;top:227.41px;font-size:13.6px;color:#000;font-weight:normal;font-family:'Liberation Serif', serif;letter-spacing:0px;-webkit-text-stroke:1.6px #000;">his/her legal representatives and assigns (including but not limited to any agency, client,</div>
<div class="t" style="left:289px;top:243.31px;font-size:13.6px;color:#000;font-weight:normal;font-family:'Liberation Serif', serif;letter-spacing:0px;-webkit-text-stroke:1.6px #000;">or publication), irrevocable permission to publish photographs of me taken at:</div>
<div class="r" style="left:288.8px;top:288.0px;width:387.8px;height:7.5px;background:#111;"></div>
<div class="t" style="left:680.7px;top:277.61px;font-size:13.6px;color:#000;font-weight:normal;font-family:'Liberation Serif', serif;letter-spacing:0px;-webkit-text-stroke:1.6px #000;">(Location, date).</div>
<div class="t" style="left:289px;top:294.11px;font-size:13.6px;color:#000;font-weight:normal;font-family:'Liberation Serif', serif;letter-spacing:0px;-webkit-text-stroke:1.6px #000;">These images may be published in any manner, including (but not limited to) calendars,</div>
<div class="t" style="left:289px;top:310.26px;font-size:13.6px;color:#000;font-weight:normal;font-family:'Liberation Serif', serif;letter-spacing:0px;-webkit-text-stroke:1.6px #000;">advertisements, periodicals, and greeting cards. Furthermore, I will hold harmless the</div>
<div class="t" style="left:289px;top:326.41px;font-size:13.6px;color:#000;font-weight:normal;font-family:'Liberation Serif', serif;letter-spacing:0px;-webkit-text-stroke:1.6px #000;">aforementioned photographer and his/her legal representatives and assigns, from any</div>
<div class="t" style="left:289px;top:342.56px;font-size:13.6px;color:#000;font-weight:normal;font-family:'Liberation Serif', serif;letter-spacing:0px;-webkit-text-stroke:1.6px #000;">liability by virtue of minor cropping that may be required, and colour and exposure shifts</div>
<div class="t" style="left:289px;top:358.71px;font-size:13.6px;color:#000;font-weight:normal;font-family:'Liberation Serif', serif;letter-spacing:0px;-webkit-text-stroke:1.6px #000;">that may occur in reproducing this photograph.</div>
<div class="t" style="left:289px;top:394.01px;font-size:13.6px;color:#000;font-weight:normal;font-family:'Liberation Serif', serif;letter-spacing:0px;-webkit-text-stroke:1.6px #000;">I affirm that I am 18 years of age or older, and competent to sign this release on my own</div>
<div class="t" style="left:289px;top:409.21px;font-size:13.6px;color:#000;font-weight:normal;font-family:'Liberation Serif', serif;letter-spacing:0px;-webkit-text-stroke:1.6px #000;">behalf. I have read this release and fully understand its implications.</div>
<div class="t" style="left:289px;top:446.11px;font-size:13.6px;color:#000;font-weight:normal;font-family:'Liberation Serif', serif;letter-spacing:0px;-webkit-text-stroke:1.6px #000;">Model’s Name</div>
<div class="r" style="left:372px;top:457.0px;width:396px;height:7.5px;background:#111;"></div>
<div class="t" style="left:289px;top:481.11px;font-size:13.6px;color:#000;font-weight:normal;font-family:'Liberation Serif', serif;letter-spacing:0px;-webkit-text-stroke:1.6px #000;">Address</div>
<div class="r" style="left:336px;top:492.0px;width:432px;height:7.5px;background:#111;"></div>
<div class="t" style="left:289px;top:516.61px;font-size:13.6px;color:#000;font-weight:normal;font-family:'Liberation Serif', serif;letter-spacing:0px;-webkit-text-stroke:1.6px #000;">City</div>
<div class="r" style="left:315px;top:527.0px;width:204px;height:7.5px;background:#111;"></div>
<div class="t" style="left:523.2px;top:516.61px;font-size:13.6px;color:#000;font-weight:normal;font-family:'Liberation Serif', serif;letter-spacing:0px;-webkit-text-stroke:1.6px #000;">Province</div>
<div class="r" style="left:572px;top:527.0px;width:59px;height:7.5px;background:#111;"></div>
<div class="t" style="left:632.9px;top:516.61px;font-size:13.6px;color:#000;font-weight:normal;font-family:'Liberation Serif', serif;letter-spacing:0px;-webkit-text-stroke:1.6px #000;">Postal Code</div>
<div class="r" style="left:696px;top:527.0px;width:97px;height:7.5px;background:#111;"></div>
<div class="t" style="left:289px;top:551.01px;font-size:13.6px;color:#000;font-weight:normal;font-family:'Liberation Serif', serif;letter-spacing:0px;-webkit-text-stroke:1.6px #000;">Country</div>
<div class="r" style="left:336px;top:561.5px;width:183px;height:7.5px;background:#111;"></div>
<div class="t" style="left:289px;top:585.31px;font-size:13.6px;color:#000;font-weight:normal;font-family:'Liberation Serif', serif;letter-spacing:0px;-webkit-text-stroke:1.6px #000;">Model’s Signature</div>
<div class="r" style="left:392px;top:596.5px;width:239px;height:7.5px;background:#111;"></div>
<div class="t" style="left:634px;top:585.61px;font-size:13.6px;color:#000;font-weight:normal;font-family:'Liberation Serif', serif;letter-spacing:0px;-webkit-text-stroke:1.6px #000;">Date</div>
<div class="r" style="left:664px;top:596.5px;width:116px;height:7.5px;background:#111;"></div>
<div class="t" style="left:289px;top:620.41px;font-size:13.6px;color:#000;font-weight:normal;font-family:'Liberation Serif', serif;letter-spacing:0px;-webkit-text-stroke:1.6px #000;">Witness’ Name</div>
<div class="r" style="left:372px;top:631.0px;width:396px;height:7.5px;background:#111;"></div>
<div class="t" style="left:289px;top:655.31px;font-size:13.6px;color:#000;font-weight:normal;font-family:'Liberation Serif', serif;letter-spacing:0px;-webkit-text-stroke:1.6px #000;">Witness Signature</div>
<div class="r" style="left:392px;top:666.5px;width:239px;height:7.5px;background:#111;"></div>
<div class="t" style="left:633px;top:655.61px;font-size:13.6px;color:#000;font-weight:normal;font-family:'Liberation Serif', serif;letter-spacing:0px;-webkit-text-stroke:1.6px #000;">Date</div>
<div class="r" style="left:664px;top:667.0px;width:100px;height:7.5px;background:#111;"></div>
<div class="t" style="left:289px;top:690.41px;font-size:13.6px;color:#000;font-weight:bold;font-family:'Liberation Serif', serif;letter-spacing:0px;-webkit-text-stroke:1.6px #000;">Release by Parent/Guardian of Minor Child</div>
<div class="t" style="left:289px;top:707.01px;font-size:13.6px;color:#000;font-weight:normal;font-family:'Liberation Serif', serif;letter-spacing:0px;-webkit-text-stroke:1.6px #000;">I, the parent or legal guardian of the minor named above, have the legal authority to</div>
<div class="t" style="left:289px;top:723.11px;font-size:13.6px;color:#000;font-weight:normal;font-family:'Liberation Serif', serif;letter-spacing:0px;-webkit-text-stroke:1.6px #000;">execute the release on behalf of the minor and I have read and fully understand the contents of</div>
<div class="t" style="left:289px;top:739.21px;font-size:13.6px;color:#000;font-weight:normal;font-family:'Liberation Serif', serif;letter-spacing:0px;-webkit-text-stroke:1.6px #000;">this release, and consent to the use of such photographs in the manner set forth in this</div>
<div class="t" style="left:289px;top:755.31px;font-size:13.6px;color:#000;font-weight:normal;font-family:'Liberation Serif', serif;letter-spacing:0px;-webkit-text-stroke:1.6px #000;">release.</div>
<div class="t" style="left:289px;top:789.61px;font-size:13.6px;color:#000;font-weight:normal;font-family:'Liberation Serif', serif;letter-spacing:0px;-webkit-text-stroke:1.6px #000;">Parent/Guardian Name</div>
<div class="r" style="left:427px;top:800.5px;width:348px;height:7.5px;background:#111;"></div>
<div class="t" style="left:289px;top:825.11px;font-size:13.6px;color:#000;font-weight:normal;font-family:'Liberation Serif', serif;letter-spacing:0px;-webkit-text-stroke:1.6px #000;">Parent/Guardian Signature</div>
<div class="r" style="left:447px;top:836.0px;width:183px;height:7.5px;background:#111;"></div>
<div class="t" style="left:633px;top:825.11px;font-size:13.6px;color:#000;font-weight:normal;font-family:'Liberation Serif', serif;letter-spacing:0px;-webkit-text-stroke:1.6px #000;">Date</div>
<div class="r" style="left:663px;top:836.0px;width:112px;height:7.5px;background:#111;"></div>
<div class="t" style="left:289px;top:862.61px;font-size:13.6px;color:#000;font-weight:normal;font-family:'Liberation Serif', serif;letter-spacing:0px;-webkit-text-stroke:1.6px #000;">Witness’ Name</div>
<div class="r" style="left:372px;top:873.5px;width:403px;height:7.5px;background:#111;"></div>
<div class="t" style="left:289px;top:895.61px;font-size:13.6px;color:#000;font-weight:normal;font-family:'Liberation Serif', serif;letter-spacing:0px;-webkit-text-stroke:1.6px #000;">Witness Signature</div>
<div class="r" style="left:392px;top:906.5px;width:238px;height:7.5px;background:#111;"></div>
<div class="t" style="left:633px;top:895.61px;font-size:13.6px;color:#000;font-weight:normal;font-family:'Liberation Serif', serif;letter-spacing:0px;-webkit-text-stroke:1.6px #000;">Date</div>
<div class="r" style="left:663px;top:906.5px;width:112px;height:7.5px;background:#111;"></div>
</div>
<div class="r" style="left:870.5px;top:133.5px;width:24px;height:24px;background:#0a6fc6;"></div>
<div class="t" style="left:878.6px;top:139.95px;font-size:14px;color:#fff;font-weight:normal;font-family:'Liberation Sans', sans-serif;letter-spacing:0px;-webkit-text-stroke:0.3px #fff;">1</div>

</body></html>
